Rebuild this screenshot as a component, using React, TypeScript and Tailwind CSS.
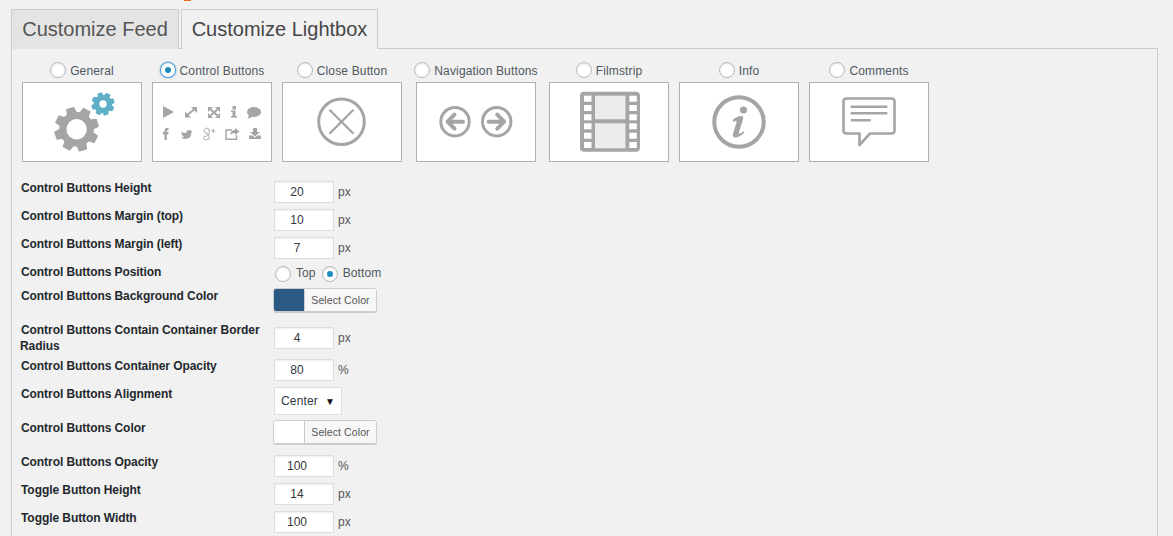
const Radio = ({ checked, focus }: { checked?: boolean; focus?: boolean }) => (
  <span
    className={`flex h-4 w-4 shrink-0 items-center justify-center rounded-full border bg-white ${
      focus ? "border-[#5b9dd9] shadow-[0_0_2px_rgba(30,140,190,0.8)]" : "border-[#b4b9be] shadow-[inset_0_1px_2px_rgba(0,0,0,0.1)]"
    }`}
  >
    {checked && <span className="h-[6px] w-[6px] rounded-full bg-[#1e8cbe]" />}
  </span>
);

const G = "#a5a5a5";

function gearPath(cx: number, cy: number, ro: number, ri: number, teeth: number, hole: number) {
  let d = "";
  const step = (Math.PI * 2) / teeth;
  for (let i = 0; i < teeth; i++) {
    const a = i * step - Math.PI / 2 - 0.3;
    const pts = [
      [ri, a - step * 0.32],
      [ro, a - step * 0.2],
      [ro, a + step * 0.2],
      [ri, a + step * 0.32],
    ];
    pts.forEach(([r, t], j) => {
      const x = cx + r * Math.cos(t);
      const y = cy + r * Math.sin(t);
      d += `${i === 0 && j === 0 ? "M" : "L"}${x.toFixed(2)} ${y.toFixed(2)} `;
    });
  }
  d += "Z ";
  d += `M${cx + hole} ${cy} A${hole} ${hole} 0 1 0 ${cx - hole} ${cy} A${hole} ${hole} 0 1 0 ${cx + hole} ${cy} Z`;
  return d;
}

const GearIcon = () => (
  <svg width="118" height="78" viewBox="0 0 118 78">
    <path d={gearPath(53.6, 46.2, 21.5, 16.5, 8, 11.2)} fill={G} fillRule="evenodd" stroke={G} strokeWidth="2" strokeLinejoin="round" />
    <path d={gearPath(80, 21, 11, 8.5, 8, 4.4)} fill="#5fafc7" fillRule="evenodd" stroke="#5fafc7" strokeWidth="1.5" strokeLinejoin="round" />
  </svg>
);

const ControlsIcon = () => (
  <svg width="118" height="78" viewBox="0 0 118 78">
    <g fill={G} stroke="none">
      <path d="M10 23 L21 29 L10 35 Z" />
      <path d="M38 24 H44 V30 Z M32 28.5 V34.5 H38 Z" />
      <path d="M55 24 H60 L55 29 Z M67 24 H62 L67 29 Z M55 35 H60 L55 30 Z M67 35 H62 L67 30 Z" />
      <rect x="79.5" y="23" width="3.5" height="3.5" />
      <path d="M78 27.5 h4.5 V33 h1.5 v1.5 h-6 V33 h1.5 v-4 H78 Z" />
      <ellipse cx="101" cy="29" rx="7" ry="5" />
      <path d="M96 32 L94.5 36 L100 33.5 Z" />
      <path d="M11.5 57 V51.5 H10 V49 H11.5 V47.8 Q11.5 45 14 45 H15.5 V47.3 H14.5 Q13.9 47.3 13.9 48 V49 H15.5 L15.2 51.5 H13.9 V57 Z" />
      <path
        transform="translate(28 47) scale(0.65) translate(-36 -47.5)"
        d="M36 50 q4.5 2 8 2 q0 -4 3.5 -4.5 q2 0 3 1.2 l2.5 -.7 -1.4 2.2 2 -.4 -1.7 1.8 q0 8 -8 9.5 q-4.5 .8 -8 -1.6 q3 .2 5 -1.5 q-2.5 0 -3.3 -2.3 h1.5 q-2.8 -1 -2.8 -3.5 l1.5 .4 q-2.6 -1.8 -1.3 -5.1 Z"
      />
      <path d="M77 52 q1 -5 5 -5 v-2 l4.5 3.5 -4.5 3.5 v-2 q-3 0 -5 2 Z" />
      <path d="M100 45 h4 v4 h3 l-5 4.5 -5 -4.5 h3 Z" />
      <path d="M96 52.5 h3.5 l2.5 2 2.5 -2 h3.5 v3.5 h-12 Z" />
    </g>
    <path d="M34.5 32 L41.5 26 M57.5 26.5 L64.5 32.5 M64.5 26.5 L57.5 32.5" stroke={G} strokeWidth="2" fill="none" />
    <g fill="none" stroke={G} strokeWidth="1.1" transform="translate(50 45) scale(0.82 0.85) translate(-56 -47)">
      <path d="M63 48 q-2 -1.5 -4 -.5 q-2.5 1.2 -1.5 4 q1 2 3.5 1.5 q1 2 -.5 3.5 q-3.5 0 -4 2.2 q.3 2.3 4 2.2 q3.6 -.3 3.3 -3.2 q-.3 -1.5 -1.5 -2.5 q3 -3 .7 -6 l1.5 -.7" />
      <path d="M66 50.5 h5 M68.5 48 v5" />
    </g>
    <path d="M79 47 h-6 v9.25 h10.5 v-4" fill="none" stroke={G} strokeWidth="1.5" />
  </svg>
);

const CloseIcon = () => (
  <svg width="118" height="78" viewBox="0 0 118 78">
    <circle cx="58.5" cy="38.7" r="22.8" fill="none" stroke={G} strokeWidth="3" />
    <path d="M46.5 26.7 L70.5 50.7 M70.5 26.7 L46.5 50.7" stroke={G} strokeWidth="2.3" />
  </svg>
);

const NavIcon = () => (
  <svg width="118" height="78" viewBox="0 0 118 78">
    <g fill="none" stroke={G}>
      <circle cx="38" cy="38.7" r="14.2" strokeWidth="3" />
      <circle cx="79.7" cy="38.7" r="14.2" strokeWidth="3" />
      <path d="M46 38.7 H31 M37.5 31.7 L30.5 38.7 L37.5 45.7" strokeWidth="4" strokeLinejoin="round" strokeLinecap="round" />
      <path d="M71.7 38.7 H86.7 M80.2 31.7 L87.2 38.7 L80.2 45.7" strokeWidth="4" strokeLinejoin="round" strokeLinecap="round" />
    </g>
  </svg>
);

const FilmIcon = () => (
  <svg width="118" height="78" viewBox="0 0 118 78">
    <rect x="30" y="8.7" width="60" height="60" rx="4" fill={G} />
    <rect x="45" y="12.7" width="30.5" height="23.6" fill="#ececec" />
    <rect x="45" y="40.3" width="30.5" height="25" fill="#ececec" />
    {[12.7, 22, 31.3, 40.3, 49.7, 59].map((y) => (
      <g key={y} fill="#ffffff">
        <rect x="34" y={y} width="7.5" height="6" />
        <rect x="79.3" y={y} width="7.5" height="6" />
      </g>
    ))}
  </svg>
);

const InfoIcon = () => (
  <svg width="118" height="78" viewBox="0 0 118 78">
    <circle cx="59" cy="39" r="24.7" fill="none" stroke={G} strokeWidth="4" />
    <circle cx="63.5" cy="27" r="3.6" fill={G} />
    <path d="M52.5 37 q5 -4.5 9.5 -4 q2 .5 1 3.5 l-4 12.5 q-.5 2 1 1.6 q1.5 -.4 3.5 -2.4 l1 1.3 q-5 5 -9.5 5 q-3 -.3 -2 -4 l3.5 -11 q.5 -2 -1 -1.6 q-1 .3 -2 1.2 Z" fill={G} />
  </svg>
);

const CommentIcon = () => (
  <svg width="118" height="78" viewBox="0 0 118 78">
    <path d="M36.5 15.5 H81.5 Q84.5 15.5 84.5 18.5 V47.5 Q84.5 50.5 81.5 50.5 H60 L49.5 62 V50.5 H36.5 Q33.5 50.5 33.5 47.5 V18.5 Q33.5 15.5 36.5 15.5 Z" fill="none" stroke={G} strokeWidth="2.6" strokeLinejoin="round" />
    <path d="M40.7 23.7 H77.3 M40.7 30.3 H77.3 M40.7 37.3 H60.7" stroke={G} strokeWidth="2.6" />
  </svg>
);

const tiles = [
  { label: "General", icon: <GearIcon />, cls: "" },
  { label: "Control Buttons", icon: <ControlsIcon />, cls: "", checked: true },
  { label: "Close Button", icon: <CloseIcon />, cls: "" },
  { label: "Navigation Buttons", icon: <NavIcon />, cls: "ml-[4px]" },
  { label: "Filmstrip", icon: <FilmIcon />, cls: "ml-[3px]" },
  { label: "Info", icon: <InfoIcon />, cls: "" },
  { label: "Comments", icon: <CommentIcon />, cls: "" },
];

const Label = ({ children }: { children: React.ReactNode }) => (
  <div className="w-[254px] shrink-0 indent-[1px] text-[12px] font-bold leading-[16px] tracking-[-0.07px] text-[#23282d]">{children}</div>
);

const NumberRow = ({ label, value, unit, h = "h-[28px]", mt = "mt-[1px]" }: { label: React.ReactNode; value: string; unit: string; h?: string; mt?: string }) => (
  <div className={`flex ${h} items-start`}>
    <Label>{label}</Label>
    <div className={`${mt} flex items-center`}>
      <div className="flex h-[22px] w-[60px] items-center justify-center border border-[#dddddd] bg-white pr-[14px] text-[12px] text-[#32373c] shadow-[inset_0_1px_2px_rgba(0,0,0,0.07)]">
        {value}
      </div>
      <span className="ml-[4px] text-[12px] tracking-[0.1px] text-[#555555]">{unit}</span>
    </div>
  </div>
);

const ColorRow = ({ label, swatch, h }: { label: string; swatch: string; h: string }) => (
  <div className={`flex ${h} items-start`}>
    <Label>{label}</Label>
    <div className="-ml-[1px] flex h-[24px] w-[104px] overflow-hidden rounded-[3px] border border-[#cccccc] shadow-[0_1px_0_#cccccc]">
      <div className="w-[30px] shrink-0" style={{ backgroundColor: swatch }} />
      <div className="flex flex-1 items-center justify-center border-l border-[#cccccc] bg-[#f7f7f7] pt-[1px] text-[10.5px] tracking-[0.1px] text-[#555555]">
        Select Color
      </div>
    </div>
  </div>
);

export default function App() {
  return (
    <div className="h-[536px] w-[1173px] overflow-hidden bg-[#f1f1f1] font-['Liberation_Sans',Arial,sans-serif]">
      <div className="ml-[184px] h-[1px] w-[7px] bg-[#f26a21]" />
      <div className="ml-[11px] mr-[15px] mt-[8px]">
        <div className="flex h-[40px] items-stretch gap-[2px]">
          <div className="box-border flex w-[168px] items-center justify-center border border-b-0 border-[#cccccc] bg-[#e4e4e4] pb-[2px] text-[20px] text-[#555555]">
            Customize Feed
          </div>
          <div className="relative z-10 box-border flex h-[40px] w-[197px] items-center justify-center border border-b-0 border-[#cccccc] bg-[#f1f1f1] pb-[2px] text-[20px] text-[#464646]">
            Customize Lightbox
          </div>
        </div>
        <div className="-mt-[1px] h-[500px] border-l border-r border-t border-[#cccccc] pl-[10px]">
          <div className="mt-[10px] flex gap-[10px]">
            {tiles.map((t) => (
              <div key={t.label} className={`flex w-[120px] flex-col items-center ${t.cls}`}>
                <div className="mb-[2px] flex h-[21px] items-center justify-center gap-[4px] whitespace-nowrap text-[12px] leading-none tracking-[0.15px] text-[#50575e]">
                  <Radio checked={t.checked} focus={t.checked} />
                  <span className="mt-[2px]">{t.label}</span>
                </div>
                <div className="box-border h-[80px] w-[120px] border border-[#b0b0b0] bg-white">{t.icon}</div>
              </div>
            ))}
          </div>
          <div className="-ml-[2px] mt-[18px]">
            <NumberRow label="Control Buttons Height" value="20" unit="px" />
            <NumberRow label="Control Buttons Margin (top)" value="10" unit="px" />
            <NumberRow label="Control Buttons Margin (left)" value="7" unit="px" />
            <div className="flex h-[24px] items-start">
              <Label>Control Buttons Position</Label>
              <div className="mt-[1px] flex items-center text-[12px] tracking-[0.1px] text-[#50575e]">
                <span className="ml-[1px]"><Radio /></span>
                <span className="ml-[5px] -mt-[1px]">Top</span>
                <span className="ml-[6px]"><Radio checked /></span>
                <span className="ml-[5px] -mt-[1px]">Bottom</span>
              </div>
            </div>
            <ColorRow label="Control Buttons Background Color" swatch="#2a5a83" h="h-[34px]" />
            <NumberRow
              label="Control Buttons Contain Container Border Radius"
              value="4"
              unit="px"
              h="h-[36px]"
              mt="mt-[5px]"
            />
            <NumberRow label="Control Buttons Container Opacity" value="80" unit="%" />
            <div className="flex h-[34px] items-start">
              <Label>Control Buttons Alignment</Label>
              <div className="mt-[1px] flex h-[28px] w-[68px] items-center justify-between border border-[#dddddd] bg-white pl-[6px] pr-[6px] text-[12px] tracking-[0.15px] text-[#32373c]">
                <span>Center</span>
                <span className="text-[10px] text-[#111111]">▼</span>
              </div>
            </div>
            <ColorRow label="Control Buttons Color" swatch="#ffffff" h="h-[34px]" />
            <NumberRow label="Control Buttons Opacity" value="100" unit="%" />
            <NumberRow label="Toggle Button Height" value="14" unit="px" />
            <NumberRow label="Toggle Button Width" value="100" unit="px" />
          </div>
        </div>
      </div>
    </div>
  );
}
